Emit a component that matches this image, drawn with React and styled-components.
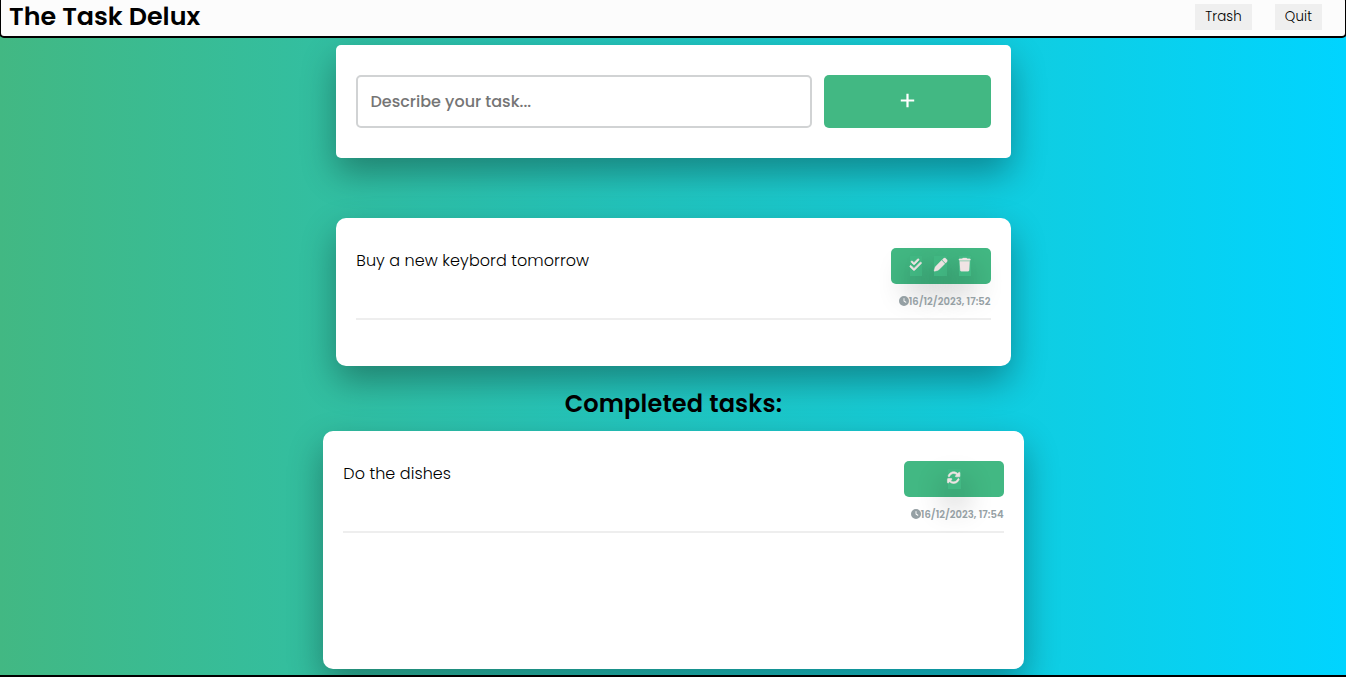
import React from "react";
import styled, { createGlobalStyle } from "styled-components";
import { FaCheckDouble, FaPen, FaTrash, FaRotate, FaClock } from "react-icons/fa6";

const GlobalStyle = createGlobalStyle`
  * { box-sizing: border-box; }
  html, body { margin: 0; height: 100%; overflow: hidden; }
  body, button, input {
    font-family: Poppins, Inter, "Liberation Sans", sans-serif;
  }
`;

const Page = styled.div`
  height: 677px;
  overflow: hidden;
  display: flex;
  flex-direction: column;
  align-items: center;
  background: linear-gradient(90deg, #42b883 0%, #00d4ff 100%);
  border-bottom: 2px solid #000;
`;

const Header = styled.header`
  position: relative;
  z-index: 1;
  flex: none;
  width: 1348px;
  height: 42px;
  margin: -4px -1px 0;
  padding: 4px 23px 0 8px;
  display: flex;
  justify-content: space-between;
  align-items: flex-start;
  background: #fcfcfc;
  border: 2px solid #000;
  border-radius: 5px;
`;

const Brand = styled.h1`
  margin: -4px 0 0;
  font-size: 25.4px;
  line-height: 36px;
  font-weight: 600;
  white-space: nowrap;
`;

const Nav = styled.nav`
  display: flex;
  gap: 23px;
  padding-top: 2px;
`;

const NavButton = styled.button`
  width: ${(p) => p.$width}px;
  height: 26px;
  padding: 0;
  border: 0;
  background: #efefef;
  color: #000;
  font-size: 13.33px;
  font-weight: 300;
  letter-spacing: 0.15px;
`;

const Card = styled.section`
  flex: none;
  width: ${(p) => p.$width}px;
  height: ${(p) => p.$height}px;
  margin-top: ${(p) => p.$top}px;
  padding: 30px 20px;
  background: #fff;
  border-radius: ${(p) => p.$radius}px;
  box-shadow: 0 15px 35px rgba(0, 0, 0, 0.33);
`;

const TaskForm = styled.form`
  display: flex;
  gap: 12px;
  height: 53px;
`;

const TaskInput = styled.input`
  flex: 1;
  min-width: 0;
  padding: 0 12px 0 13px;
  border: 2px solid #d1d3d4;
  border-radius: 5px;
  font-size: 16px;
  font-weight: 500;
  &::placeholder { color: #757575; opacity: 1; }
`;

const AddButton = styled.button`
  width: 167px;
  padding: 0 0 2px;
  border: 0;
  border-radius: 5px;
  background: #42b883;
  color: #fff;
  display: flex;
  align-items: center;
  justify-content: center;
`;

const Task = styled.article`
  height: 72px;
  display: flex;
  justify-content: space-between;
  border-bottom: 2px solid #eee;
`;

const TaskText = styled.p`
  margin: 0;
  padding: 1px 0 0 0.8px;
  font-size: 16px;
  line-height: 24px;
  font-weight: 300;
  color: #000;
  letter-spacing: 0.06px;
`;

const TaskSide = styled.div`
  display: flex;
  flex-direction: column;
  align-items: flex-end;
`;

const Actions = styled.div`
  width: 100px;
  height: 36px;
  padding-left: ${(p) => p.$indent}px;
  display: flex;
  justify-content: center;
  align-items: center;
  gap: 12px;
  border-radius: 5px;
  background: #42b883;
`;

const ActionButton = styled.button`
  width: ${(p) => p.$width}px;
  height: 20px;
  padding: 0;
  border: 0;
  display: flex;
  align-items: center;
  justify-content: center;
  background: #42b883;
  color: #f0e4e4;
  font-size: 13.33px;
  box-shadow: 0 15px 30px rgba(0, 0, 0, 0.45);
  svg {
    flex: none;
    margin-top: -2px;
    overflow: visible;
    stroke: currentColor;
    stroke-width: ${(p) => p.$stroke || 0}px;
  }
`;

const Stamp = styled.time`
  display: flex;
  align-items: center;
  margin-top: 10px;
  height: 15px;
  color: #95a0a4;
  font-size: 10px;
  font-weight: 600;
  white-space: nowrap;
  svg { margin-top: -1px; }
`;

const SectionTitle = styled.h2`
  margin: 20px 0 0;
  padding-left: 1px;
  height: 45px;
  font-size: 24px;
  line-height: 36px;
  font-weight: 600;
  letter-spacing: 0.17px;
`;

function TaskRow({ text, stamp, indent = 0, children }) {
  return (
    <Task>
      <TaskText>{text}</TaskText>
      <TaskSide>
        <Actions $indent={indent}>{children}</Actions>
        <Stamp><FaClock /><span>{stamp}</span></Stamp>
      </TaskSide>
    </Task>
  );
}

export default function App() {
  return (
    <>
      <GlobalStyle />
      <Page>
        <Header>
          <Brand>The Task Delux</Brand>
          <Nav>
            <NavButton $width={57}>Trash</NavButton>
            <NavButton $width={47}>Quit</NavButton>
          </Nav>
        </Header>
        <Card $width={675} $height={113} $top={7} $radius={5}>
          <TaskForm>
            <TaskInput placeholder="Describe your task..." />
            <AddButton type="button" aria-label="Add task">
              <svg width="15" height="15" viewBox="0 0 15 15" stroke="currentColor" strokeWidth="2.2">
                <path d="M0.8 7.5H14.2M7.5 0.8V14.2" />
              </svg>
            </AddButton>
          </TaskForm>
        </Card>
        <Card $width={675} $height={148} $top={60} $radius={10}>
          <TaskRow text="Buy a new keybord tomorrow" stamp="16/12/2023, 17:52">
            <ActionButton $width={12} $stroke={26} aria-label="Complete"><FaCheckDouble /></ActionButton>
            <ActionButton $width={13} $stroke={12} aria-label="Edit"><FaPen /></ActionButton>
            <ActionButton $width={12} $stroke={12} aria-label="Delete"><FaTrash /></ActionButton>
          </TaskRow>
        </Card>
        <SectionTitle>Completed tasks:</SectionTitle>
        <Card $width={701} $height={238} $top={0} $radius={10}>
          <TaskRow text="Do the dishes" stamp="16/12/2023, 17:54" indent={1}>
            <ActionButton $width={13} $stroke={22} aria-label="Restore"><FaRotate /></ActionButton>
          </TaskRow>
        </Card>
      </Page>
    </>
  );
}
